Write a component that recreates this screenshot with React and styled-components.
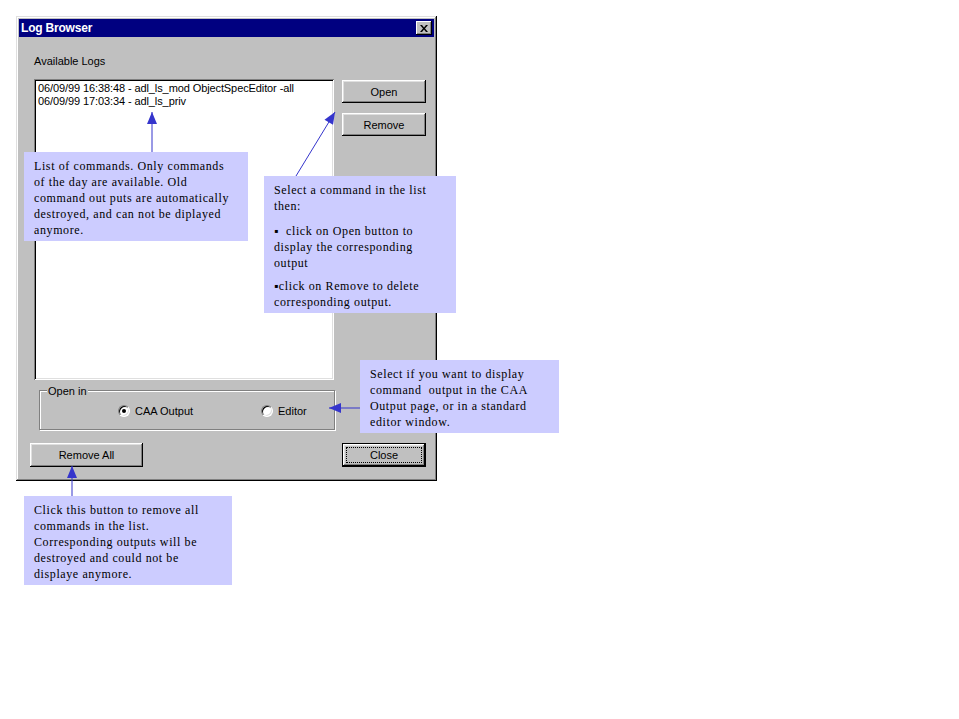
import styled, {createGlobalStyle} from 'styled-components';

const GlobalStyle = createGlobalStyle`
    html, body {
        margin: 0;
        padding: 0;
        background: #ffffff;
    }
`;

const Page = styled.div`
    position: relative;
    width: 959px;
    height: 719px;
    box-sizing: border-box;
    padding: 16px 0 0 16px;
    overflow: hidden;
`;

const Window = styled.div`
    box-sizing: border-box;
    width: 421px;
    height: 465px;
    padding: 3px;
    background: #c0c0c0;
    box-shadow: inset -1px -1px #000000, inset 1px 1px #dfdfdf,
    inset -2px -2px #808080, inset 2px 2px #ffffff;
    display: flex;
    flex-direction: column;
    font: 11px "Liberation Sans", Arial, sans-serif;
    color: #000;
`;

const TitleBar = styled.div`
    height: 18px;
    background: #000080;
    display: flex;
    align-items: center;
    justify-content: space-between;
    padding: 0 2px 0 2px;
`;

const Title = styled.span`
    color: #fff;
    font-weight: bold;
    font-size: 12px;
    letter-spacing: -0.2px;
`;

const TitleButton = styled.div`
    box-sizing: border-box;
    width: 16px;
    height: 14px;
    background: #c0c0c0;
    box-shadow: inset -1px -1px #000, inset 1px 1px #fff, inset -2px -2px #808080;
    display: flex;
    align-items: center;
    justify-content: center;
`;

const Client = styled.div`
    display: flex;
    flex-direction: column;
    width: 415px;
`;

const Label = styled.div`
    margin: 18px 0 0 15px;
    line-height: 13px;
`;

const MainRow = styled.div`
    display: flex;
    gap: 8px;
    margin: 11px 0 0 15px;
`;

const ListBox = styled.div`
    box-sizing: border-box;
    width: 300px;
    height: 301px;
    background: #fff;
    padding: 3px 4px;
    box-shadow: inset 1px 1px #808080, inset -1px -1px #ffffff,
    inset 2px 2px #000000, inset -2px -2px #dfdfdf;
`;

const ListItem = styled.div`
    line-height: 13px;
    white-space: nowrap;
    letter-spacing: -0.1px;
`;

const ButtonColumn = styled.div`
    display: flex;
    flex-direction: column;
    gap: 10px;
    margin-top: 1px;
`;

const Button = styled.button`
    box-sizing: border-box;
    width: ${p => p.$w}px;
    height: ${p => p.$h || 23}px;
    background: #c0c0c0;
    border: ${p => p.$default ? '1px solid #000' : 'none'};
    box-shadow: inset -1px -1px #000000, inset 1px 1px #ffffff,
    inset -2px -2px #808080, inset 2px 2px #dfdfdf;
    font: 11px "Liberation Sans", Arial, sans-serif;
    color: #000;
    padding: ${p => p.$default ? '3px' : '0'};
    display: flex;
    align-items: stretch;
    justify-content: center;
`;

const ButtonText = styled.span`
    flex: 1;
    display: flex;
    align-items: center;
    justify-content: center;
    border: 1px ${p => p.$focus ? 'dotted #000' : 'solid transparent'};
`;

const Group = styled.div`
    position: relative;
    box-sizing: border-box;
    width: 296px;
    height: 40px;
    margin: 10px 0 0 20px;
    border: 1px solid #808080;
    box-shadow: inset 1px 1px #ffffff, 1px 1px #ffffff;
    display: grid;
    grid-template-columns: 143px auto;
    align-items: center;
    padding: 1px 0 0 78px;
`;

const GroupLabel = styled.span`
    position: absolute;
    left: 7px;
    top: -6px;
    padding: 0 1px;
    background: #c0c0c0;
    line-height: 13px;
`;

const Option = styled.label`
    display: flex;
    align-items: center;
    gap: 5px;
`;

const Radio = styled.span`
    box-sizing: border-box;
    width: 12px;
    height: 12px;
    border-radius: 50%;
    background: #fff;
    border: 1px solid;
    border-color: #808080 #ffffff #ffffff #808080;
    box-shadow: inset 1px 1px #000, inset -1px -1px #dfdfdf;
    display: flex;
    align-items: center;
    justify-content: center;

    &::after {
        content: '';
        width: 4px;
        height: 4px;
        border-radius: 50%;
        background: ${p => p.$checked ? '#000' : 'transparent'};
    }
`;

const BottomRow = styled.div`
    display: flex;
    justify-content: space-between;
    margin: 13px 8px 0 11px;
`;

const Callout = styled.div`
    position: absolute;
    left: ${p => p.$x}px;
    top: ${p => p.$y}px;
    width: ${p => p.$w}px;
    height: ${p => p.$h}px;
    box-sizing: border-box;
    padding: 6px 0 0 10px;
    background: #ccccff;
    font: 12px "Liberation Serif", "Times New Roman", serif;
    letter-spacing: 0.6px;
    line-height: 16px;
    color: #000;
`;

const Line = styled.div`
    white-space: pre;
    margin-top: ${p => p.$gap || 0}px;
`;

const Arrows = styled.svg`
    position: absolute;
    left: 0;
    top: 0;
    pointer-events: none;
`;

const ARROW = '#3535cc';

const arrowHead = (x1, y1, x2, y2, len = 12, half = 5) => {
    const dx = x2 - x1;
    const dy = y2 - y1;
    const d = Math.hypot(dx, dy);
    const ux = dx / d;
    const uy = dy / d;
    const bx = x2 - ux * len;
    const by = y2 - uy * len;
    return `${x2},${y2} ${bx - uy * half},${by + ux * half} ${bx + uy * half},${by - ux * half}`;
};

const arrows = [
    [152, 152, 152, 112],
    [296, 176, 335, 112],
    [360, 408, 329, 408],
    [72, 496, 72, 466],
];

const callouts = [
    {
        x: 24, y: 152, w: 224, h: 89,
        lines: [
            ['List of commands. Only commands'],
            ['of the day are available. Old'],
            ['command out puts are automatically'],
            ['destroyed, and can not be diplayed'],
            ['anymore.'],
        ],
    },
    {
        x: 264, y: 176, w: 192, h: 137,
        lines: [
            ['Select a command in the list'],
            ['then:'],
            ['\u25AA  click on Open button to', 9],
            ['display the corresponding'],
            ['output'],
            ['\u25AAclick on Remove to delete', 7],
            ['corresponding output.'],
        ],
    },
    {
        x: 360, y: 360, w: 199, h: 73,
        lines: [
            ['Select if you want to display'],
            ['command  output in the CAA'],
            ['Output page, or in a standard'],
            ['editor window.'],
        ],
    },
    {
        x: 24, y: 496, w: 208, h: 89,
        lines: [
            ['Click this button to remove all'],
            ['commands in the list.'],
            ['Corresponding outputs will be'],
            ['destroyed and could not be'],
            ['displaye anymore.'],
        ],
    },
];

const logs = [
    '06/09/99 16:38:48 - adl_ls_mod ObjectSpecEditor -all',
    '06/09/99 17:03:34 - adl_ls_priv',
];

export default function App() {
    return (
        <>
            <GlobalStyle/>
            <Page>
                <Window>
                    <TitleBar>
                        <Title>Log Browser</Title>
                        <TitleButton>
                            <svg width="8" height="7" viewBox="0 0 8 7">
                                <path d="M0 0h2l2 2.5L6 0h2L5 3.5 8 7H6L4 4.5 2 7H0l3-3.5z" fill="#000"/>
                            </svg>
                        </TitleButton>
                    </TitleBar>
                    <Client>
                        <Label>Available Logs</Label>
                        <MainRow>
                            <ListBox>
                                {logs.map((log, i) => <ListItem key={i}>{log}</ListItem>)}
                            </ListBox>
                            <ButtonColumn>
                                <Button $w={84}><ButtonText>Open</ButtonText></Button>
                                <Button $w={84}><ButtonText>Remove</ButtonText></Button>
                            </ButtonColumn>
                        </MainRow>
                        <Group>
                            <GroupLabel>Open in</GroupLabel>
                            <Option><Radio $checked/>CAA Output</Option>
                            <Option><Radio/>Editor</Option>
                        </Group>
                        <BottomRow>
                            <Button $w={113} $h={24}><ButtonText>Remove All</ButtonText></Button>
                            <Button $w={84} $h={24} $default><ButtonText $focus>Close</ButtonText></Button>
                        </BottomRow>
                    </Client>
                </Window>

                <Arrows width="959" height="719">
                    {arrows.map(([x1, y1, x2, y2], i) => (
                        <g key={i}>
                            <line x1={x1} y1={y1} x2={x2} y2={y2} stroke={ARROW} strokeWidth="1"/>
                            <polygon points={arrowHead(x1, y1, x2, y2)} fill={ARROW}/>
                        </g>
                    ))}
                </Arrows>

                {callouts.map((c, i) => (
                    <Callout key={i} $x={c.x} $y={c.y} $w={c.w} $h={c.h}>
                        {c.lines.map(([text, gap], j) => <Line key={j} $gap={gap}>{text}</Line>)}
                    </Callout>
                ))}
            </Page>
        </>
    );
}
